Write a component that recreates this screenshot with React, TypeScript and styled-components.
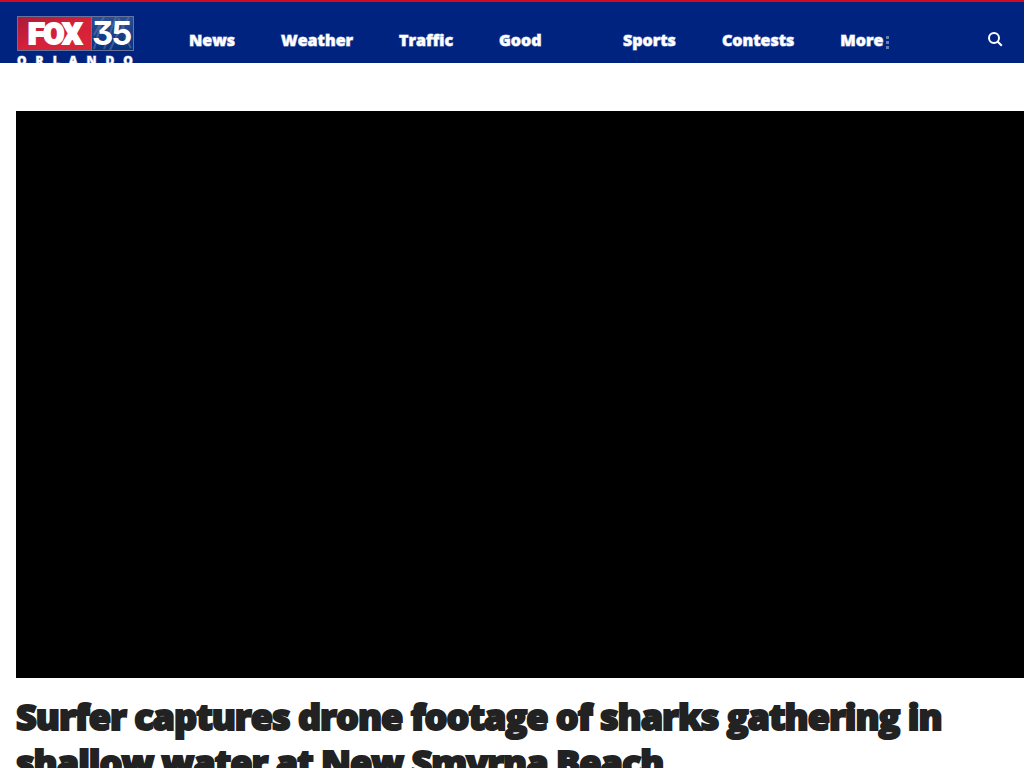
import React from "react";
import styled, { createGlobalStyle } from "styled-components";

const GlobalStyle = createGlobalStyle`
  *, *::before, *::after { box-sizing: border-box; }
  body {
    margin: 0;
    background: #fff;
    color: #222;
    font-family: "Open Sans", "Noto Sans", sans-serif;
  }
  html { overflow: hidden; }
`;

const Header = styled.header`
  display: flex;
  align-items: flex-start;
  height: 63px;
  overflow: hidden;
  padding: 0 17px 0 16px;
  background: #00237f;
  border-top: 2px solid #ce0a24;
`;

const LogoLink = styled.a`
  display: block;
  flex: none;
  width: 118px;
  padding-top: 13px;
`;

const Logo = styled.svg`
  display: block;
  width: 118px;
  height: 52px;
`;

const Nav = styled.nav`
  flex: 1;
  padding: 26px 0 0 32px;
`;

const NavList = styled.ul`
  display: flex;
  margin: 0;
  padding: 0;
  list-style: none;
`;

const NavItem = styled.li<{ $wide?: boolean }>`
  min-width: ${({ $wide }) => ($wide ? "124px" : "0")};
  padding: 0 23px;
`;

const NavLink = styled.a`
  color: #fff;
  font-size: 16px;
  font-weight: 800;
  line-height: 24px;
  text-decoration: none;
  -webkit-text-stroke: 1px rgba(255, 255, 255, 0.6);
`;

const MoreButton = styled.button`
  display: flex;
  align-items: center;
  gap: 3px;
  padding: 0;
  border: 0;
  background: none;
  color: #fff;
  font: 800 16px/24px "Open Sans", "Noto Sans", sans-serif;
  cursor: pointer;
  -webkit-text-stroke: 1px rgba(255, 255, 255, 0.6);
`;

const Dots = styled.svg`
  width: 4px;
  height: 13px;
  margin-top: 4px;
`;

const SearchButton = styled.button`
  flex: none;
  padding: 4px;
  margin-top: 25px;
  border: 0;
  background: none;
  line-height: 0;
  cursor: pointer;
`;

const Article = styled.main`
  padding: 48px 0 0 16px;
`;

const Video = styled.div`
  width: 100%;
  aspect-ratio: 16 / 9;
  background: #000;
`;

const Headline = styled.h1`
  margin: 16px 16px 0 0;
  color: #222;
  font-size: 36px;
  font-weight: 800;
  line-height: 46px;
  letter-spacing: -1px;
  -webkit-text-stroke: 2px #222;
`;

const ChannelNumber = styled.text`
  font: 700 33px Inter, sans-serif;
  font-feature-settings: "cv09";
  letter-spacing: -2px;
`;

const sections = ["News", "Weather", "Traffic", "Good", "Sports", "Contests"];

function FoxLogo() {
  return (
    <Logo viewBox="0 0 118 52" role="img" aria-label="FOX 35 Orlando">
      <defs>
        <linearGradient id="red" x1="0" y1="0" x2="1" y2="1">
          <stop offset="0" stopColor="#a91c38" />
          <stop offset="0.5" stopColor="#d5203a" />
          <stop offset="1" stopColor="#d82737" />
        </linearGradient>
        <linearGradient id="blue" x1="0" y1="0" x2="0" y2="1">
          <stop offset="0" stopColor="#2d4e91" />
          <stop offset="1" stopColor="#07317d" />
        </linearGradient>
      </defs>
      <rect x="1" y="1" width="117" height="35" fill="#667399" />
      <rect x="2" y="2" width="73" height="33" fill="url(#red)" />
      <rect x="76" y="2" width="41" height="33" fill="url(#blue)" />
      <path d="M78 34 86 5M88 2 78 20M100 2l-12 32M102 3l8 14M113 2l-8 13M109 22l6 11M94 35l8-17" stroke="#5875ab" strokeWidth="2" opacity="0.6" />
      <text x="12" y="29" fill="#fff" stroke="#fff" strokeWidth="2" fontFamily="Roboto" fontSize="30" fontWeight="900" letterSpacing="-1">FOX</text>
      <ChannelNumber x="76" y="30" fill="#fff">35</ChannelNumber>
      <text x="1" y="50" fill="#fff" stroke="#fff" strokeWidth="1" strokeOpacity="0.5" fontFamily="Open Sans" fontSize="12" fontWeight="800" letterSpacing="9">ORLANDO</text>
    </Logo>
  );
}

export default function App() {
  return (
    <>
      <GlobalStyle />
      <Header>
        <LogoLink href="#home"><FoxLogo /></LogoLink>
        <Nav aria-label="Main">
          <NavList>
            {sections.map((name) => (
              <NavItem key={name} $wide={name === "Good"}>
                <NavLink href={`#${name.toLowerCase()}`}>{name}</NavLink>
              </NavItem>
            ))}
            <NavItem>
              <MoreButton type="button">
                More
                <Dots viewBox="0 0 4 13" aria-hidden="true">
                  <path d="M0 0h3v3H0zM0 5h3v3H0zM0 10h3v3H0z" fill="#6680b5" />
                </Dots>
              </MoreButton>
            </NavItem>
          </NavList>
        </Nav>
        <SearchButton type="button" aria-label="Search">
          <svg width="16" height="16" viewBox="0 0 16 16" fill="none" stroke="#fff" strokeWidth="2">
            <circle cx="7" cy="7" r="5" />
            <path d="m10.5 10.5 4.3 4.3" />
          </svg>
        </SearchButton>
      </Header>
      <Article>
        <Video role="region" aria-label="Video player" />
        <Headline>
          Surfer captures drone footage of sharks gathering in shallow water at New Smyrna Beach
        </Headline>
      </Article>
    </>
  );
}
